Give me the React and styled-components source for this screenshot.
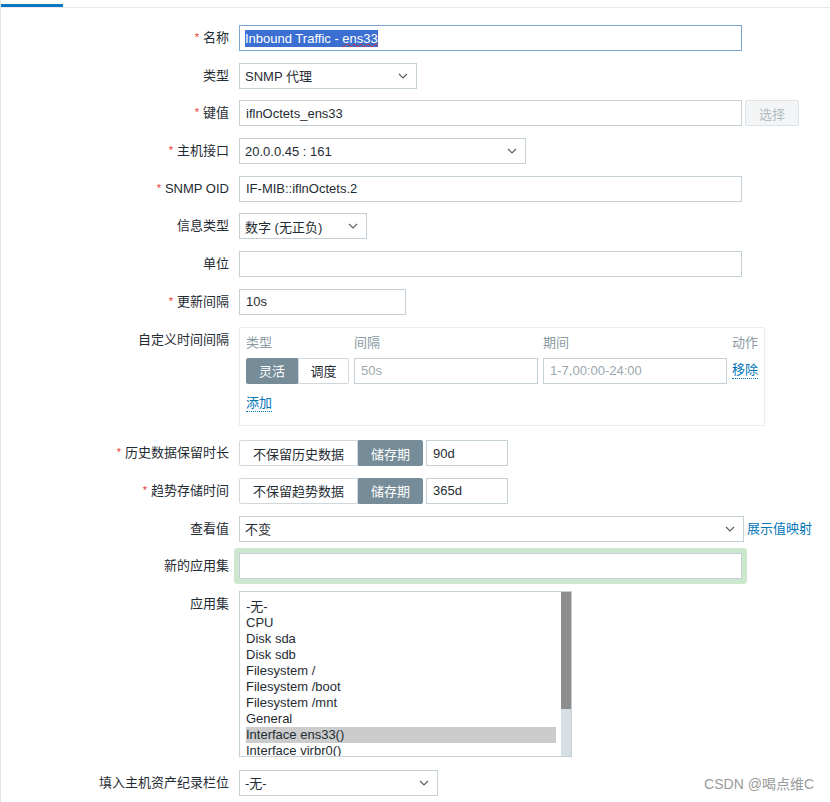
import React from "react";
import styled, { createGlobalStyle } from "styled-components";

const GlobalStyle = createGlobalStyle`
  html, body { margin: 0; padding: 0; background: #ffffff; }
  body { font-family: "Liberation Sans", "Noto Sans CJK SC", Arial, sans-serif; font-size: 13px; color: #1f2c33; }
  * { box-sizing: border-box; }
`;

const Page = styled.div`
  width: 830px;
  min-height: 802px;
  border-left: 1px solid #dde3e6;
  background: #fff;
  overflow: hidden;
`;

const TabBar = styled.div`
  height: 8px;
  display: flex;
  align-items: flex-end;
  border-bottom: 1px solid #e8eaeb;
`;

const ActiveTab = styled.div`
  width: 62px;
  height: 3px;
  background: #0a76c4;
`;

const Form = styled.div`
  display: grid;
  grid-template-columns: 228px 1fr;
  column-gap: 10px;
  row-gap: 11.7px;
  padding-top: 17px;
`;

const Label = styled.div`
  text-align: right;
  line-height: 26px;
  font-size: 13px;
  color: #1f2c33;
  white-space: nowrap;
`;

const Star = styled.span`
  color: #e33734;
  font-size: 11px;
  margin-right: 4px;
  position: relative;
  top: -1px;
`;

const Field = styled.div`
  display: flex;
  align-items: center;
  gap: ${(p) => (p.$gap ?? 3)}px;
  min-height: 26px;
  margin-bottom: ${(p) => p.$mb || 0}px;
`;

const TextBox = styled.div`
  height: 26px;
  width: ${(p) => (p.$w ? `${p.$w}px` : "auto")};
  flex: none;
  border: 1px solid ${(p) => (p.$focus ? "#7ba5cc" : "#c5d0d6")};
  padding: 0 6px;
  display: flex;
  align-items: center;
  font-size: 13px;
  color: ${(p) => (p.$muted ? "#9aa7ae" : "#1f2c33")};
  background: #fff;
  white-space: nowrap;
  overflow: hidden;
  box-shadow: ${(p) => (p.$glow ? "0 0 0 5px #cbe7cd" : "none")};
  border-radius: ${(p) => (p.$glow ? "1px" : "0")};
`;

const SelectBox = styled(TextBox)`
  justify-content: space-between;
  padding-left: 5px;
  padding-right: 8px;
`;

const Selected = styled.span`
  background: #3b6fd2;
  color: #ffffff;
  line-height: 17px;
  margin-left: -1px;
`;

const Squiggle = styled.span`
  text-decoration: underline wavy #e03030;
  text-decoration-thickness: 1px;
  text-underline-offset: 0px;
  text-decoration-skip-ink: none;
`;

const DisabledButton = styled.div`
  width: 54px;
  height: 26px;
  display: flex;
  align-items: center;
  justify-content: center;
  border: 1px solid #dde3e6;
  background: #f2f4f5;
  color: #b0bcc2;
  font-size: 13px;
  border-radius: 2px;
`;

const Link = styled.span`
  color: #0275b8;
  font-size: 13px;
  line-height: 16px;
  white-space: nowrap;
  border-bottom: ${(p) => (p.$dotted ? "1px dotted #0275b8" : "none")};
`;

const IntervalBox = styled.div`
  width: 526px;
  height: 99px;
  border: 1px solid #ebeef0;
  padding: 5px 6px 0 6px;
`;

const IntervalGrid = styled.div`
  display: grid;
  grid-template-columns: 103px 184px 184px 1fr;
  column-gap: 5px;
  row-gap: 5px;
  grid-template-rows: 20px 26px;
`;

const HeadCell = styled.div`
  line-height: 20px;
  color: #8a99a1;
  font-size: 13px;
  text-align: ${(p) => (p.$right ? "right" : "left")};
`;

const Cell = styled.div`
  display: flex;
  align-items: center;
  justify-content: ${(p) => (p.$right ? "flex-end" : "flex-start")};
`;

const AddRow = styled.div`
  height: 20px;
  margin-top: 10px;
  display: flex;
  align-items: center;
`;

const SegGroup = styled.div`
  display: flex;
  height: 26px;
  flex: none;
`;

const SegButton = styled.div`
  width: ${(p) => p.$w}px;
  height: 26px;
  display: flex;
  align-items: center;
  justify-content: center;
  font-size: 13px;
  white-space: nowrap;
  border: 1px solid ${(p) => (p.$active ? "#768d99" : "#cfd8dd")};
  background: ${(p) => (p.$active ? "#768d99" : "#ffffff")};
  color: ${(p) => (p.$active ? "#ffffff" : "#1f2c33")};
  &:first-child { border-radius: 2px 0 0 2px; }
  &:last-child { border-radius: 0 2px 2px 0; }
`;

const ListBox = styled.div`
  width: 333px;
  height: 166px;
  border: 1px solid #c5d0d6;
  display: flex;
  overflow: hidden;
  align-self: flex-start;
`;

const Options = styled.div`
  flex: 1;
  padding: 7px 5px 0 6px;
  overflow: hidden;
`;

const Option = styled.div`
  height: 16px;
  line-height: 16px;
  font-size: 13px;
  color: #1f2c33;
  white-space: nowrap;
  background: ${(p) => (p.$selected ? "#cccccc" : "transparent")};
`;

const ScrollTrack = styled.div`
  width: 10px;
  background: #d5dfe4;
  display: flex;
  flex-direction: column;
`;

const ScrollThumb = styled.div`
  height: 117px;
  background: #8d8d8d;
`;

const Watermark = styled.div`
  margin-left: auto;
  padding-right: 16px;
  color: #9a9a9a;
  font-size: 14px;
  white-space: nowrap;
`;

const Chevron = () => (
  <svg width="10" height="6" viewBox="0 0 10 6" fill="none">
    <polyline points="1,1 5,5 9,1" stroke="#5a6066" strokeWidth="1.2" />
  </svg>
);

const Select = ({ w, children }) => (
  <SelectBox $w={w}>
    <span>{children}</span>
    <Chevron />
  </SelectBox>
);

const Req = ({ children }) => (
  <Label>
    <Star>*</Star>
    {children}
  </Label>
);

const apps = [
  "-无-",
  "CPU",
  "Disk sda",
  "Disk sdb",
  "Filesystem /",
  "Filesystem /boot",
  "Filesystem /mnt",
  "General",
  "Interface ens33()",
  "Interface virbr0()",
];

export default function App() {
  return (
    <>
      <GlobalStyle />
      <Page>
        <TabBar>
          <ActiveTab />
        </TabBar>
        <Form>
          <Req>名称</Req>
          <Field>
            <TextBox $w={503} $focus>
              <Selected>
                Inbound Traffic - <Squiggle>ens33</Squiggle>
              </Selected>
            </TextBox>
          </Field>

          <Label>类型</Label>
          <Field>
            <Select w={178}>SNMP 代理</Select>
          </Field>

          <Req>键值</Req>
          <Field>
            <TextBox $w={503}>iflnOctets_ens33</TextBox>
            <DisabledButton>选择</DisabledButton>
          </Field>

          <Req>主机接口</Req>
          <Field>
            <Select w={287}>20.0.0.45 : 161</Select>
          </Field>

          <Req>SNMP OID</Req>
          <Field>
            <TextBox $w={503}>IF-MIB::iflnOctets.2</TextBox>
          </Field>

          <Label>信息类型</Label>
          <Field>
            <Select w={128}>数字 (无正负)</Select>
          </Field>

          <Label>单位</Label>
          <Field>
            <TextBox $w={503} />
          </Field>

          <Req>更新间隔</Req>
          <Field>
            <TextBox $w={167}>10s</TextBox>
          </Field>

          <Label>自定义时间间隔</Label>
          <Field $mb={3}>
            <IntervalBox>
              <IntervalGrid>
                <HeadCell>类型</HeadCell>
                <HeadCell>间隔</HeadCell>
                <HeadCell>期间</HeadCell>
                <HeadCell $right>动作</HeadCell>
                <Cell>
                  <SegGroup>
                    <SegButton $w={52} $active>灵活</SegButton>
                    <SegButton $w={51}>调度</SegButton>
                  </SegGroup>
                </Cell>
                <TextBox $muted>50s</TextBox>
                <TextBox $muted>1-7,00:00-24:00</TextBox>
                <Cell>
                  <Link $dotted>移除</Link>
                </Cell>
              </IntervalGrid>
              <AddRow>
                <Link $dotted>添加</Link>
              </AddRow>
            </IntervalBox>
          </Field>

          <Req>历史数据保留时长</Req>
          <Field>
            <SegGroup>
              <SegButton $w={119}>不保留历史数据</SegButton>
              <SegButton $w={65} $active>储存期</SegButton>
            </SegGroup>
            <TextBox $w={82}>90d</TextBox>
          </Field>

          <Req>趋势存储时间</Req>
          <Field>
            <SegGroup>
              <SegButton $w={119}>不保留趋势数据</SegButton>
              <SegButton $w={65} $active>储存期</SegButton>
            </SegGroup>
            <TextBox $w={82}>365d</TextBox>
          </Field>

          <Label>查看值</Label>
          <Field $gap={3}>
            <Select w={505}>不变</Select>
            <Link>展示值映射</Link>
          </Field>

          <Label>新的应用集</Label>
          <Field>
            <TextBox $w={503} $glow />
          </Field>

          <Label>应用集</Label>
          <Field $mb={1}>
            <ListBox>
              <Options>
                {apps.map((a) => (
                  <Option key={a} $selected={a === "Interface ens33()"}>
                    {a}
                  </Option>
                ))}
              </Options>
              <ScrollTrack>
                <ScrollThumb />
              </ScrollTrack>
            </ListBox>
          </Field>

          <Label>填入主机资产纪录栏位</Label>
          <Field>
            <Select w={199}>-无-</Select>
            <Watermark>CSDN @喝点维C</Watermark>
          </Field>
        </Form>
      </Page>
    </>
  );
}
